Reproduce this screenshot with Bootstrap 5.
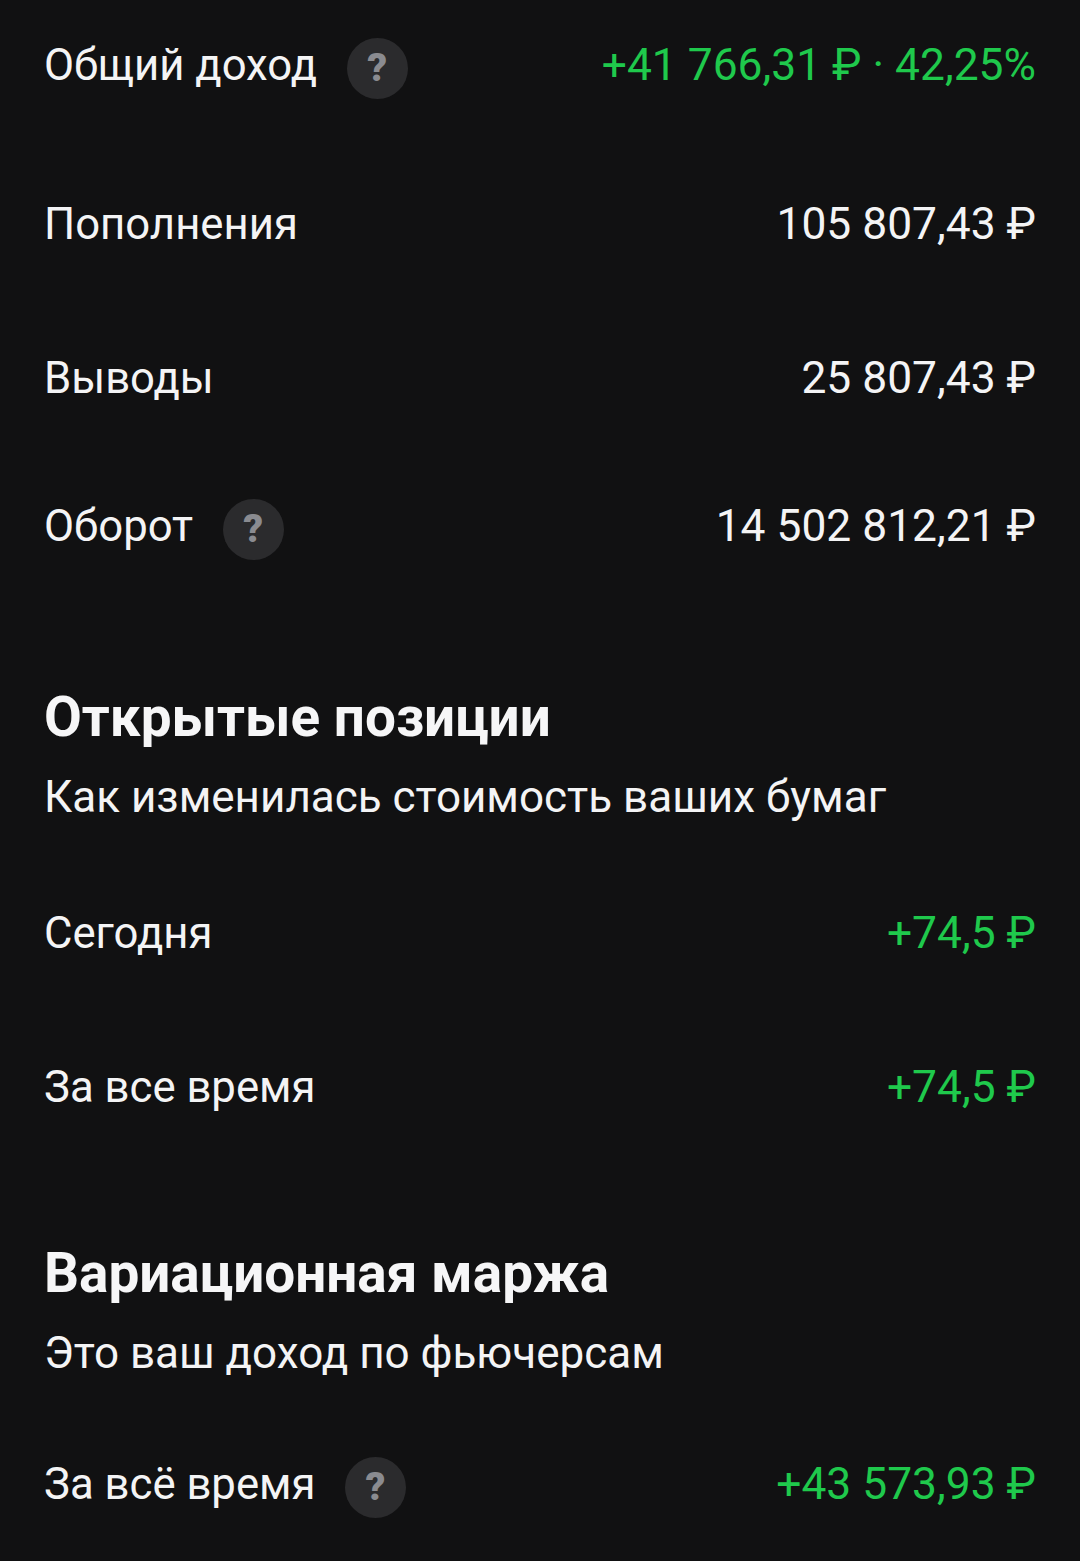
<!doctype html>
<html lang="ru"><head><meta charset="utf-8">
<link rel="stylesheet" href="https://cdn.jsdelivr.net/npm/bootstrap@5.3.0/dist/css/bootstrap.min.css">
<style>
html,body{height:100%}
body{background:#111112;color:#f4f4f5;font-family:Roboto,"Liberation Sans",sans-serif;font-size:43.7px;line-height:60px;overflow:hidden}
.sheet{padding:35px 44px 0 44px}
.stat-row{height:60px}
.stat-val{font-size:44.35px}
.pos{color:#1fc94c}
.gap-a{margin-top:99px}
.gap-b{margin-top:94px}
.gap-c{margin-top:88px}
.gap-d{margin-top:94px}
.gap-e{margin-top:76px}
.gap-f{margin-top:71px}
.sec-head{font-weight:700;font-size:54.9px;line-height:60px;margin:0;color:#f6f6f7}
.sec-one{margin-top:131px}
.sec-two{margin-top:126px}
.sec-sub{margin-top:20px;line-height:60px;font-size:44px}
.label-wrap{height:60px}
.help{width:61px;height:61px;border-radius:50%;background:#2b2b2d;color:#8a8b90;font-weight:900;font-size:39px;line-height:61px;text-align:center;margin-left:29.5px;margin-top:3.4px;flex:none}
</style></head><body>
<main class="sheet">
<div class="stat-row d-flex justify-content-between align-items-center"><div class="label-wrap d-flex align-items-start"><span>Общий доход</span><span class="help">?</span></div><span class="stat-val pos">+41 766,31 ₽ · 42,25%</span></div>
<div class="stat-row gap-a d-flex justify-content-between align-items-center"><span>Пополнения</span><span class="stat-val">105 807,43 ₽</span></div>
<div class="stat-row gap-b d-flex justify-content-between align-items-center"><span>Выводы</span><span class="stat-val">25 807,43 ₽</span></div>
<div class="stat-row gap-c d-flex justify-content-between align-items-center"><div class="label-wrap d-flex align-items-start"><span>Оборот</span><span class="help">?</span></div><span class="stat-val">14 502 812,21 ₽</span></div>
<h2 class="sec-head sec-one">Открытые позиции</h2>
<div class="sec-sub">Как изменилась стоимость ваших бумаг</div>
<div class="stat-row gap-e d-flex justify-content-between align-items-center"><span>Сегодня</span><span class="stat-val pos">+74,5 ₽</span></div>
<div class="stat-row gap-d d-flex justify-content-between align-items-center"><span>За все время</span><span class="stat-val pos">+74,5 ₽</span></div>
<h2 class="sec-head sec-two">Вариационная маржа</h2>
<div class="sec-sub">Это ваш доход по фьючерсам</div>
<div class="stat-row gap-f d-flex justify-content-between align-items-center"><div class="label-wrap d-flex align-items-start"><span>За всё время</span><span class="help">?</span></div><span class="stat-val pos">+43 573,93 ₽</span></div>
</main>
</body></html>
